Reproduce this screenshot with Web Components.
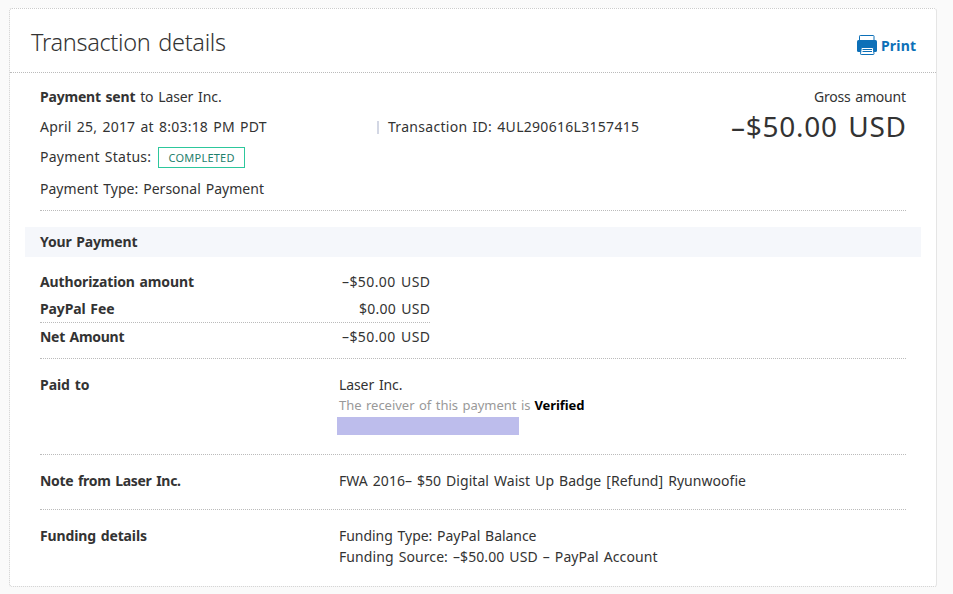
<!DOCTYPE html>
<html lang="en">
<head>
<meta charset="utf-8">
<title>Transaction details</title>
<style>
    body {
        margin: 0;
        background: #fafafa;
        color: #333;
        font: 14px/20px "Noto Sans", "Open Sans", sans-serif;
    }
</style>
</head>
<body>
<transaction-card>
    <fit-text slot="title" width="195">Transaction details</fit-text>
    <print-link slot="action"><fit-text width="35">Print</fit-text></print-link>

    <payment-summary>
        <div><fit-text width="95.5"><b>Payment sent</b></fit-text> <fit-text style="margin-left: 1px" width="81.5">to Laser Inc.</fit-text></div>
        <fit-text slot="date" width="226.5">April 25, 2017 at 8:03:18 PM PDT</fit-text>
        <fit-text slot="id" width="251">Transaction ID: 4UL290616L3157415</fit-text>
        <fit-text slot="status" width="111">Payment Status:</fit-text>
        <status-badge slot="status"><fit-text width="66">COMPLETED</fit-text></status-badge>
        <fit-text slot="type" width="224">Payment Type: Personal Payment</fit-text>
        <fit-text slot="label" width="92">Gross amount</fit-text>
        <fit-text slot="amount" width="175">–$50.00 USD</fit-text>
    </payment-summary>

    <section-band><fit-text width="97.5">Your Payment</fit-text></section-band>

    <amount-table>
        <amount-row>
            <fit-text slot="label" width="154">Authorization amount</fit-text>
            <fit-text width="88">–$50.00 USD</fit-text>
        </amount-row>
        <amount-row>
            <fit-text slot="label" width="74.5">PayPal Fee</fit-text>
            <fit-text width="71">$0.00 USD</fit-text>
        </amount-row>
        <amount-row total>
            <fit-text slot="label" width="84.5">Net Amount</fit-text>
            <fit-text width="88">–$50.00 USD</fit-text>
        </amount-row>
    </amount-table>

    <detail-row style="--bottom: 19px">
        <fit-text slot="label" width="49.5">Paid to</fit-text>
        <div><fit-text width="63.5">Laser Inc.</fit-text></div>
        <verified-note><fit-text width="191.5">The receiver of this payment is</fit-text><fit-text slot="state" width="50">Verified</fit-text></verified-note>
        <redacted-bar></redacted-bar>
    </detail-row>
    <detail-row style="--bottom: 18px">
        <fit-text slot="label" width="141">Note from Laser Inc.</fit-text>
        <fit-text width="407">FWA 2016– $50 Digital Waist Up Badge [Refund] Ryunwoofie</fit-text>
    </detail-row>
    <detail-row last style="--bottom: 19px">
        <fit-text slot="label" width="107">Funding details</fit-text>
        <div><fit-text width="197.5">Funding Type: PayPal Balance</fit-text></div>
        <div style="margin-top: 1px"><fit-text width="318.5">Funding Source: –$50.00 USD – PayPal Account</fit-text></div>
    </detail-row>
</transaction-card>

<script>
(function () {
    "use strict";

    /** Registers an element whose shadow root is just styles and markup. */
    function define(name, css, html) {
        customElements.define(name, class extends HTMLElement {
            constructor() {
                super();
                this.attachShadow({ mode: 'open' }).innerHTML = `<style>${css}</style>${html}`;
            }
        });
    }

    define('transaction-card', `
        :host {
            display: block;
            box-sizing: border-box;
            width: 928px;
            height: 579px;
            margin: 8px 0 0 9px;
            background: #fff;
            border: 1px dotted #ccc;
            border-right: 1px solid #e5e5e5;
            border-radius: 3px;
        }
        header {
            display: flex;
            justify-content: space-between;
            height: 63px;
            padding: 0 20px 0 21px;
            border-bottom: 1px dotted #bbb;
        }
        h1 {
            margin: 17px 0 0;
            font-size: 23.5px;
            font-weight: 300;
            line-height: 32px;
        }
        main {
            padding: 14px 30px 0;
        }
    `, `
        <header>
            <h1><slot name="title"></slot></h1>
            <slot name="action"></slot>
        </header>
        <main><slot></slot></main>
    `);

    define('print-link', `
        :host {
            display: flex;
            gap: 4px;
            margin-top: 26px;
            color: #0d70b8;
            font-weight: 700;
            line-height: 21px;
        }
        svg { display: block; width: 20px; height: 20px; }
    `, `
        <svg viewBox="0 0 20 20">
            <path d="M2.5 6V1.2Q2.5 .5 3.2 .5H16.3Q17 .5 17 1.2V6" fill="none" stroke="currentColor"/>
            <path d="M1.5 5H18.5Q20 5 20 6.5V15.5Q20 17 18.5 17H1.5Q0 17 0 15.5V6.5Q0 5 1.5 5Z" fill="currentColor"/>
            <path d="M4.3 12.5H16.2L17 18.8Q17 19.5 16.3 19.5H4.2Q3.5 19.5 3.5 18.8Z" fill="#fff" stroke="currentColor"/>
            <path d="M5.5 14.5H15M5.5 16.5H15" stroke="currentColor"/>
        </svg>
        <slot></slot>
    `);

    define('payment-summary', `
        :host {
            display: flex;
            justify-content: space-between;
            height: 123px;
            border-bottom: 1px dotted #bbb;
        }
        .when { display: flex; margin: 10px 0; }
        .date { width: 337px; }
        .id { display: flex; align-items: center; gap: 9px; }
        .id::before { content: ""; width: 2px; height: 13px; background: #d3d7e4; }
        .status { display: flex; gap: 7px; height: 22px; margin-bottom: 10px; }
        .gross { text-align: right; }
        .amount { margin-top: 1px; font-size: 28px; line-height: 36px; }
    `, `
        <div>
            <slot></slot>
            <div class="when">
                <div class="date"><slot name="date"></slot></div>
                <div class="id"><slot name="id"></slot></div>
            </div>
            <div class="status"><slot name="status"></slot></div>
            <slot name="type"></slot>
        </div>
        <div class="gross">
            <slot name="label"></slot>
            <div class="amount"><slot name="amount"></slot></div>
        </div>
    `);

    define('status-badge', `
        :host {
            display: block;
            box-sizing: border-box;
            width: 87px;
            height: 21px;
            border: 1px solid #2dc79c;
            color: #1e806c;
            font-size: 11px;
            line-height: 20px;
            text-align: center;
        }
    `, `<slot></slot>`);

    define('section-band', `
        :host {
            display: block;
            margin: 16px -15px 15px;
            padding: 5px 15px;
            background: #f5f7fb;
            font-weight: 700;
        }
    `, `<slot></slot>`);

    define('amount-table', `
        :host {
            display: block;
            height: 86px;
            border-bottom: 1px dotted #bbb;
        }
    `, `<slot></slot>`);

    define('amount-row', `
        :host {
            display: flex;
            justify-content: space-between;
            width: 390px;
            padding-bottom: 7px;
        }
        :host([total]) {
            margin-top: -4px;
            padding-top: 4px;
            border-top: 1px dotted #bbb;
        }
        b { font-weight: 700; }
    `, `<b><slot name="label"></slot></b><slot></slot>`);

    define('detail-row', `
        :host {
            display: grid;
            grid-template-columns: 299px 1fr;
            padding: 16px 0 var(--bottom);
            border-bottom: 1px dotted #bbb;
        }
        :host([last]) { border-bottom: 0; }
        b { font-weight: 700; }
    `, `<b><slot name="label"></slot></b><div><slot></slot></div>`);

    define('verified-note', `
        :host { display: flex; gap: 4px; font-size: 13px; color: #999; }
        b { color: #000; font-weight: 700; }
    `, `<slot></slot><b><slot name="state"></slot></b>`);

    define('redacted-bar', `
        :host {
            display: block;
            width: 182px;
            height: 18px;
            margin: 2px 0 0 -2px;
            background: #bdbdec;
        }
    `, ``);

    /**
     * One line of text, tracked so that it fills the given width.
     * Registered last: the inherited font has to be in place when it measures.
     */
    customElements.define('fit-text', class extends HTMLElement {
        constructor() {
            super();
            this.attachShadow({ mode: 'open' }).innerHTML = `
                <style>
                    :host {
                        display: inline-block;
                        white-space: nowrap;
                        word-spacing: .09em;
                        vertical-align: top;
                    }
                </style><slot></slot>`;
        }

        connectedCallback() {
            const range = document.createRange();
            range.selectNodeContents(this);
            const natural = range.getBoundingClientRect().width;
            const gaps = this.textContent.length - 1;
            const spacing = (Number(this.getAttribute('width')) - natural) / gaps;
            this.style.letterSpacing = `${spacing}px`;
            this.style.marginRight = `${-spacing}px`;
        }
    });
})();
</script>
</body>
</html>
